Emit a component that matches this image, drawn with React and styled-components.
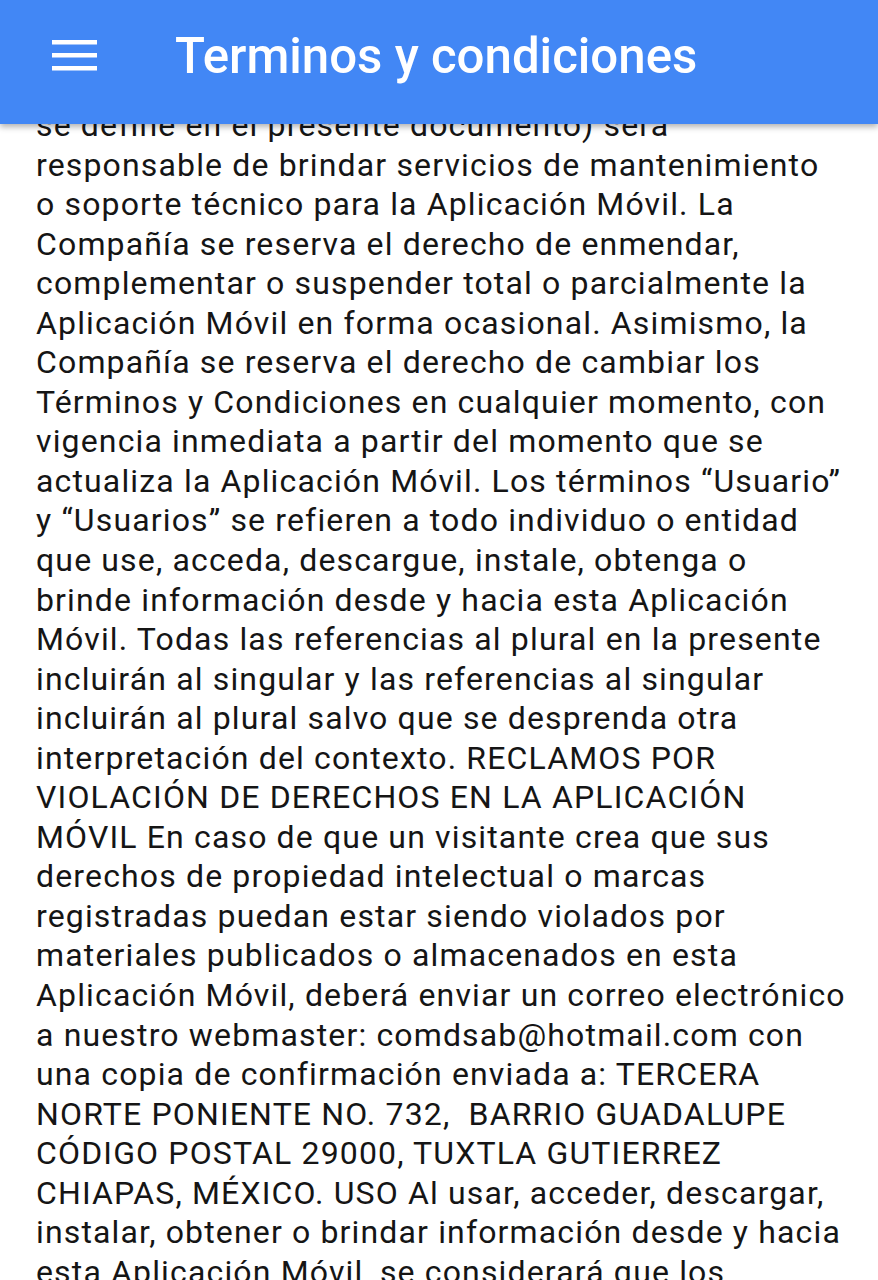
import styled, { createGlobalStyle } from "styled-components";

const GlobalStyle = createGlobalStyle`
  body {
    margin: 0;
    background: #ffffff;
    font-family: Roboto, "Noto Sans", sans-serif;
  }
`;

const lines = [
  "se define en el presente documento) será",
  "responsable de brindar servicios de mantenimiento",
  "o soporte técnico para la Aplicación Móvil. La",
  "Compañía se reserva el derecho de enmendar,",
  "complementar o suspender total o parcialmente la",
  "Aplicación Móvil en forma ocasional. Asimismo, la",
  "Compañía se reserva el derecho de cambiar los",
  "Términos y Condiciones en cualquier momento, con",
  "vigencia inmediata a partir del momento que se",
  "actualiza la Aplicación Móvil. Los términos “Usuario”",
  "y “Usuarios” se refieren a todo individuo o entidad",
  "que use, acceda, descargue, instale, obtenga o",
  "brinde información desde y hacia esta Aplicación",
  "Móvil. Todas las referencias al plural en la presente",
  "incluirán al singular y las referencias al singular",
  "incluirán al plural salvo que se desprenda otra",
  "interpretación del contexto. RECLAMOS POR",
  "VIOLACIÓN DE DERECHOS EN LA APLICACIÓN",
  "MÓVIL En caso de que un visitante crea que sus",
  "derechos de propiedad intelectual o marcas",
  "registradas puedan estar siendo violados por",
  "materiales publicados o almacenados en esta",
  "Aplicación Móvil, deberá enviar un correo electrónico",
  "a nuestro webmaster: comdsab@hotmail.com con",
  "una copia de confirmación enviada a: TERCERA",
  "NORTE PONIENTE NO. 732,  BARRIO GUADALUPE",
  "CÓDIGO POSTAL 29000, TUXTLA GUTIERREZ",
  "CHIAPAS, MÉXICO. USO Al usar, acceder, descargar,",
  "instalar, obtener o brindar información desde y hacia",
  "esta Aplicación Móvil, se considerará que los",
];

export default function App() {
  return (
    <>
      <GlobalStyle />
      <TopBar>
        <MenuButton aria-label="menu">
          <svg width="45" height="32" viewBox="0 0 45 32">
            <rect x="0" y="0" width="45" height="4.5" fill="#fff" />
            <rect x="0" y="13" width="45" height="4.5" fill="#fff" />
            <rect x="0" y="26" width="45" height="4.5" fill="#fff" />
          </svg>
        </MenuButton>
        <Title>Terminos y condiciones</Title>
      </TopBar>
      <Content>
        {lines.map((line, i) => (
          <Line key={i}>{line}</Line>
        ))}
      </Content>
    </>
  );
}

const TopBar = styled.header`
  position: fixed;
  top: 0;
  left: 0;
  right: 0;
  height: 124px;
  background: #4287f5;
  display: flex;
  align-items: center;
  box-shadow: 0 3px 6px rgba(0, 0, 0, 0.3);
  z-index: 10;
  padding-bottom: 12px;
  box-sizing: border-box;
`;

const MenuButton = styled.div`
  width: 45px;
  height: 32px;
  margin-left: 52px;
  display: flex;
`;

const Title = styled.h1`
  margin: 0 0 0 78px;
  color: #ffffff;
  font-family: Roboto, "Noto Sans", sans-serif;
  font-weight: 500;
  font-size: 49.2px;
  letter-spacing: 0;
`;

const Content = styled.main`
  padding: 106px 0 0 36px;
  color: #151515;
  font-size: 32px;
  letter-spacing: 1.15px;
  line-height: 39.55px;
`;

const Line = styled.div`
  white-space: pre;
`;
